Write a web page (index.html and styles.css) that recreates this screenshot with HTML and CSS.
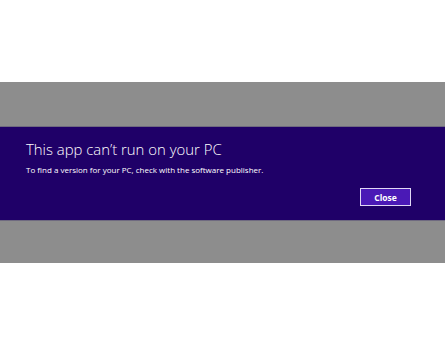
FILE: index.html
```html
<!DOCTYPE html>
<html lang="en">
<head>
    <meta charset="UTF-8">
    <meta name="viewport" content="width=device-width, initial-scale=1.0">
    <title>This app can't run on your PC</title>
    <link rel="stylesheet" href="styles.css">
</head>
<body>
    <!-- Dimmed overlay with the message band -->
    <div class="overlay">
        <div class="dialog">
            <h1 class="dialog-title">This app can’t run on your PC</h1>
            <p class="dialog-text">To find a version for your PC, check with the software publisher.</p>
            <div class="dialog-actions">
                <button class="close-button">Close</button>
            </div>
        </div>
    </div>
</body>
</html>
```

FILE: styles.css
```css
body {
    margin: 0;
    background-color: #ffffff;
    font-family: "Open Sans", "Noto Sans", sans-serif;
}

.overlay {
    margin-top: 82px;
    padding: 44px 0 42px;
    background-color: #8d8d8d;
}

.dialog {
    background-color: #1f0068;
    border-top: 1px solid #6f6a80;
    border-bottom: 1px solid #6f6a80;
    padding: 11px 34px 14px 26px;
    color: #ffffff;
}

.dialog-title {
    margin: 0;
    font-size: 14.9px;
    font-weight: 300;
    line-height: 22px;
}

.dialog-text {
    margin: 4px 0 0;
    font-size: 8px;
    line-height: 12px;
}

.dialog-actions {
    display: flex;
    justify-content: flex-end;
    margin-top: 12px;
}

.close-button {
    width: 51px;
    height: 18px;
    padding: 0;
    background-color: #4a19b6;
    border: 1px solid #e0d8f4;
    color: #ffffff;
    font-family: inherit;
    font-size: 8.5px;
    font-weight: 700;
}
```
